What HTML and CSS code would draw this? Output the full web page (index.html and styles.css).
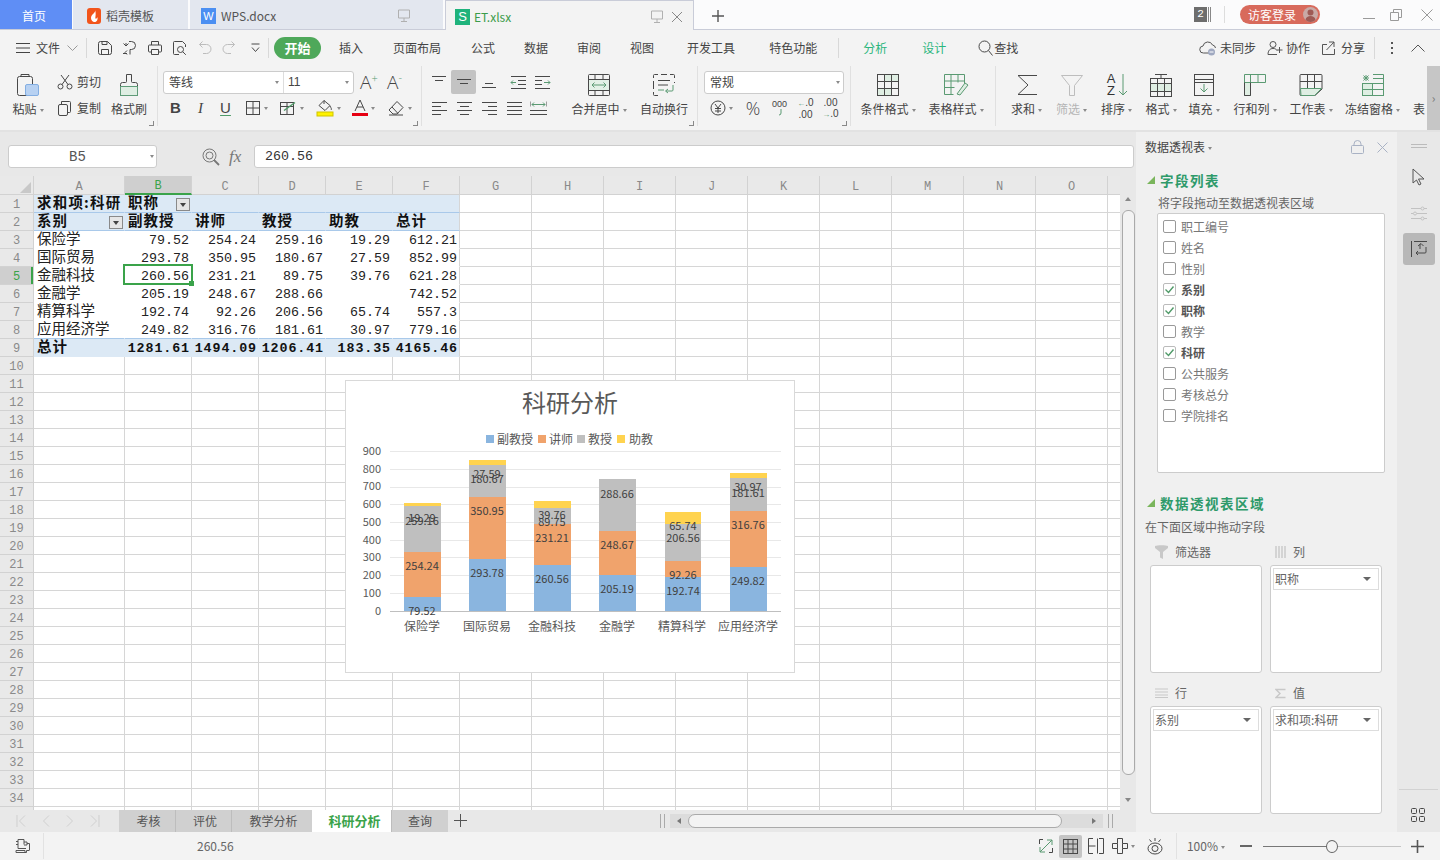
FILE: index.html
```html
<!DOCTYPE html>
<html lang="zh">
<head>
<meta charset="utf-8">
<title>ET.xlsx</title>
<link rel="stylesheet" href="styles.css">
</head>
<body>
<div class="app">
  <header class="titlebar">
    <div class="tab home">首页</div>
    <div class="tab dao">
      <svg class="ti" width="14" height="16" viewBox="0 0 14 16"><rect width="14" height="16" rx="3" fill="#f2541b"/><path d="M8 2c1 3-4 4-4 8 0 2 1.500 4 3.500 4C9.500 14 11 12 10.500 9c-.5 1.500-1.500 2-2 1.500C8 9 9.500 6 8 2z" fill="#fff"/></svg>
      <span>稻壳模板</span>
    </div>
    <div class="tab doc">
      <span class="fileic w">W</span><span>WPS.docx</span>
      <svg class="mon" width="12" height="14" viewBox="0 0 12 14"><path d="M.5 1h11v8H.5zM6 9v3M3 12.500h6"/></svg>
    </div>
    <div class="tab et">
      <span class="fileic s">S</span><span class="etname">ET.xlsx</span>
      <svg class="mon" width="12" height="14" viewBox="0 0 12 14"><path d="M.5 1h11v8H.5zM6 9v3M3 12.500h6"/></svg>
      <svg class="closex" width="12" height="12" viewBox="0 0 12 12"><path d="M1 1l10 10M11 1L1 11"/></svg>
    </div>
    <svg class="plus" width="12" height="12" viewBox="0 0 12 12"><path d="M6 0v12M0 6h12"/></svg>
    <div class="tright">
      <span class="badge">2</span><span class="badgebars"></span><span class="tsep"></span>
      <span class="login">访客登录<svg width="15" height="15" viewBox="0 0 15 15"><circle cx="7.500" cy="7.500" r="7.500" fill="#c9a9a6" stroke="none"/><circle cx="7.500" cy="5.500" r="3" fill="#9e5a55" stroke="none"/><path d="M2.500 13c.5-3 2.500-4 5-4s4.500 1 5 4a7.500 7.500 0 0 1-10 0z" fill="#9e5a55" stroke="none"/></svg></span>
      <svg class="win mn" width="12" height="12" viewBox="0 0 12 12"><path d="M0 9.500h12"/></svg>
      <svg class="win rs" width="12" height="12" viewBox="0 0 12 12"><path d="M.5 3.500h8v8h-8zM3.500 3.500v-3h8v8h-3"/></svg>
      <svg class="win cl" width="12" height="12" viewBox="0 0 12 12"><path d="M.5.500l11 11M11.500.500l-11 11"/></svg>
    </div>
  </header>

  <nav class="menu">
    <svg class="mburger" width="14" height="12" viewBox="0 0 14 12"><path d="M0 1.500h14M0 6h14M0 10.500h14"/></svg>
    <span class="mfile">文件</span>
    <svg class="mchev" width="11" height="6" viewBox="0 0 11 6"><path d="M.5.500l5 5 5-5"/></svg>
    <span class="vsep"></span>
    <div class="qa">
      <svg width="16" height="16" viewBox="0 0 16 16"><path d="M1.500 3.500a2 2 0 0 1 2-2h7l4 4v7a2 2 0 0 1-2 2h-9a2 2 0 0 1-2-2zM4.500 14.500v-5h7v5M5 1.500v3h5v-3"/></svg>
      <svg width="16" height="16" viewBox="0 0 16 16"><path d="M7 1.500h2.500a4 4 0 0 1 0 8H8v5M1.500 3.500L4 6l2.500-2.500M4 6V3M1 13.500h4M5 10.500l-2 2 2 2"/></svg>
      <svg width="16" height="16" viewBox="0 0 16 16"><path d="M4.500 5V1.500h7V5M4.500 12h-2a1 1 0 0 1-1-1V6a1 1 0 0 1 1-1h11a1 1 0 0 1 1 1v5a1 1 0 0 1-1 1h-2M4.500 9.500h7v5h-7z"/></svg>
      <svg width="16" height="16" viewBox="0 0 16 16"><path d="M7 14.500H2.500a1 1 0 0 1-1-1v-11a1 1 0 0 1 1-1h8l3 3V7M8.500 6.500a3 3 0 1 1 0 6 3 3 0 0 1 0-6zM10.800 11.800l3 3"/></svg>
      <svg class="dis" width="16" height="16" viewBox="0 0 16 16"><path d="M5.500 1.500l-3 3 3 3M2.500 4.500h7a4 4 0 0 1 0 9H6"/></svg>
      <svg class="dis" width="16" height="16" viewBox="0 0 16 16"><path d="M10.500 1.500l3 3-3 3M13.500 4.500h-7a4 4 0 0 0 0 9H10"/></svg>
      <svg width="9" height="10" viewBox="0 0 9 10"><path d="M.5 1h8M1 4.500l3.500 4 3.500-4"/></svg>
    </div>
    <span class="vsep s2"></span>
    <span class="pill">开始</span>
    <span class="mi m1">插入</span><span class="mi m2">页面布局</span><span class="mi m3">公式</span><span class="mi m4">数据</span><span class="mi m4">审阅</span><span class="mi m4">视图</span><span class="mi m5">开发工具</span><span class="mi m6">特色功能</span>
    <span class="vsep s3"></span>
    <span class="mi grn m7">分析</span><span class="mi grn m8">设计</span>
    <span class="find"><svg width="15" height="16" viewBox="0 0 15 16"><circle cx="6.500" cy="6.500" r="5.500"/><path d="M10.500 10.500l4 5"/></svg>查找</span>
    <div class="mright">
      <span class="act"><svg width="18" height="16" viewBox="0 0 18 16"><path d="M10 13H4.500a3.500 3.500 0 0 1-.5-7A5 5 0 0 1 13.500 5a3.500 3.500 0 0 1 3 3"/><circle cx="12.500" cy="12" r="3.500" fill="#9fa8c0" stroke="none"/><path d="M10.500 12h4" stroke="#fff"/></svg>未同步</span>
      <span class="act"><svg width="16" height="16" viewBox="0 0 16 16"><circle cx="6" cy="4.500" r="3"/><path d="M1 14.500c0-4 2-6 5-6 2 0 3 .5 4 2M1 14.500h9M12.500 7v6M9.500 10h6"/></svg>协作</span>
      <span class="act"><svg width="17" height="16" viewBox="0 0 17 16"><path d="M6 4.500H1.500v10h12V9M8 2l5 0 0 5M13 2L5.500 10"/></svg>分享</span>
      <span class="vsep s4"></span>
      <span class="dots"><i></i><i></i><i></i></span>
      <svg class="caret" width="14" height="8" viewBox="0 0 14 8"><path d="M.5 7.500L7 1l6.500 6.500"/></svg>
    </div>
  </nav>

  <section class="ribbon">
    <div class="grp g1">
      <div class="big w40">
        <svg width="24" height="24" viewBox="0 0 24 24"><rect x="1.500" y="3.500" width="15" height="19" rx="2"/><path d="M5 3.500V1.500h8v2"/><rect x="9.500" y="11.500" width="13" height="11" rx="1.500" fill="#b7d1f2" stroke="#83aee2"/></svg>
        <span class="lb">粘贴<i class="ar"></i></span>
      </div>
      <div class="smcol">
        <span class="sm"><svg width="16" height="16" viewBox="0 0 16 16"><circle cx="3.500" cy="12.500" r="2.500"/><circle cx="12.500" cy="12.500" r="2.500"/><path d="M5 10.500L12 1M11 10.500L4 1"/></svg>剪切</span>
        <span class="sm"><svg width="16" height="16" viewBox="0 0 16 16"><rect x="1.500" y="4.500" width="9" height="11" rx="1.500"/><path d="M4.500 4.500v-3h8a1 1 0 0 1 1 1v9a1 1 0 0 1-1 1h-2"/></svg>复制</span>
      </div>
      <div class="big w42">
        <svg width="24" height="24" viewBox="0 0 24 24"><path d="M9.500 1.500h5v7a1 1 0 0 0 1 1h3a2 2 0 0 1 2 2v2h-17v-2a2 2 0 0 1 2-2h3a1 1 0 0 0 1-1z"/><rect x="3.500" y="13.500" width="17" height="9" fill="#dfeee3" stroke="#5f9b78"/></svg>
        <span class="lb">格式刷</span>
      </div>
      <i class="cm"></i>
    </div>

    <div class="grp g2">
      <div class="stack">
        <div class="r1">
          <div class="combo font"><span class="cf1">等线<i class="ar"></i></span><span class="cf2">11<i class="ar"></i></span></div>
          <span class="aa big1">A<sup>+</sup></span><span class="aa big2">A<sup>-</sup></span>
        </div>
        <div class="r2">
          <span class="fb bd">B</span><span class="fb it">I</span><span class="fb un">U</span>
          <span class="fa f1"><svg width="16" height="16" viewBox="0 0 16 16"><rect x="1.500" y="1.500" width="13" height="13"/><path d="M8 1.500v13M1.500 8h13"/></svg><i class="ar"></i></span>
          <span class="fa f2"><svg width="18" height="16" viewBox="0 0 18 16"><rect x="1.500" y="2.500" width="13" height="12"/><path d="M1.500 6.500h13M8 2.500v12"/><path d="M5 10.500l11-8" stroke="#4f9a68" stroke-width="1.400"/></svg><i class="ar"></i></span>
          <span class="fa f3"><svg width="18" height="18" viewBox="0 0 18 18"><path d="M8 1.500l6 5-5 5-6-5zM8 1.500V5M14 7c1 2 2 3 1 4"/><rect x="1" y="13" width="16" height="4" fill="#fff200" stroke="#cfc400"/></svg><i class="ar"></i></span>
          <span class="fa f4"><svg width="16" height="18" viewBox="0 0 16 18"><path d="M3 12L8 1l5 11M5 8h6"/><rect y="14" width="16" height="3" fill="#e60012" stroke="none"/></svg><i class="ar"></i></span>
          <span class="fa f5"><svg width="18" height="16" viewBox="0 0 18 16"><path d="M10 1.500l6 6-6 6.500H6L2 10zM5 7l6 6.500"/><path d="M2 15h14" /></svg><i class="ar"></i></span>
        </div>
      </div>
      <i class="cm"></i>
    </div>

    <div class="grp g3">
      <div class="stack alignset">
        <div class="r1 al">
          <span class="ab"><svg width="16" height="16" viewBox="0 0 16 16"><path d="M1 2.500h14M4 6.500h8"/></svg></span>
          <span class="ab on"><svg width="16" height="16" viewBox="0 0 16 16"><path d="M1 5.500h14M4 9.500h8"/></svg></span>
          <span class="ab"><svg width="16" height="16" viewBox="0 0 16 16"><path d="M4 9.500h8M1 13.500h14"/></svg></span>
          <span class="ab ind"><svg width="16" height="16" viewBox="0 0 16 16"><path d="M1 2.500h15M8 6.500h8M8 10.500h8M1 14.500h15"/><path d="M6 8.500H1M3 6.500l-2 2 2 2" stroke="#5a9a72"/></svg></span>
          <span class="ab"><svg width="16" height="16" viewBox="0 0 16 16"><path d="M0 2.500h15M0 6.500h7M0 10.500h7M0 14.500h15"/><path d="M9 8.500h6M13 6.500l2 2-2 2" stroke="#5a9a72"/></svg></span>
        </div>
        <div class="r2 al">
          <span class="ab"><svg width="16" height="16" viewBox="0 0 16 16"><path d="M1 2.500h15M1 6.500h9M1 10.500h15M1 14.500h9"/></svg></span>
          <span class="ab"><svg width="16" height="16" viewBox="0 0 16 16"><path d="M1 2.500h15M4 6.500h9M1 10.500h15M4 14.500h9"/></svg></span>
          <span class="ab"><svg width="16" height="16" viewBox="0 0 16 16"><path d="M1 2.500h15M7 6.500h9M1 10.500h15M7 14.500h9"/></svg></span>
          <span class="ab"><svg width="16" height="16" viewBox="0 0 16 16"><path d="M1 2.500h15M1 6.500h15M1 10.500h15M1 14.500h15"/></svg></span>
          <span class="ab"><svg width="17" height="16" viewBox="0 0 17 16"><path d="M0 1.500v5M17 1.500v5M0 10.500h17M0 14.500h17"/><path d="M2 4.500h13M4 2.500l-2 2 2 2M13 2.500l2 2-2 2" stroke="#5a9a72"/></svg></span>
        </div>
      </div>
      <div class="big w60">
        <svg width="24" height="24" viewBox="0 0 24 24"><rect x="1.500" y="1.500" width="21" height="21" rx="1"/><path d="M1.500 6.500h21M1.500 17.500h21M8 1.500v5M16 1.500v5M8 17.500v5M16 17.500v5"/><rect x="2" y="7" width="20" height="10" fill="#e3f0e6" stroke="none"/><path d="M5 12h14M7.500 9.500L5 12l2.500 2.500M16.500 9.500L19 12l-2.500 2.500" stroke="#5a9a72"/></svg>
        <span class="lb">合并居中<i class="ar"></i></span>
      </div>
      <div class="big w60 sp5">
        <svg width="24" height="24" viewBox="0 0 24 24"><path d="M1.500 5V2.500a1 1 0 0 1 1-1H6M18 1.500h3.500a1 1 0 0 1 1 1V5M1.500 19v2.500a1 1 0 0 0 1 1H6M22.500 10v-1M9 1.500h6M1.500 8v8M6 7.500h12M6 12h10"/><path d="M6 17h6M21 12v5a1 1 0 0 1-1 1h-6M16 16l-2.500 2 2.500 2" stroke="#5a9a72"/></svg>
        <span class="lb">自动换行</span>
      </div>
      <i class="cm"></i>
    </div>

    <div class="grp g4">
      <div class="stack">
        <div class="r1"><div class="combo num"><span>常规</span><i class="ar"></i></div></div>
        <div class="r2 nf">
          <span class="yen"><svg width="16" height="16" viewBox="0 0 16 16"><circle cx="8" cy="8" r="7"/><path d="M5 4l3 4 3-4M8 8v5M5 8.500h6M5 11h6"/></svg><i class="ar"></i></span>
          <span class="pct">%</span>
          <span class="thou">000<svg width="6" height="7" viewBox="0 0 6 7"><path d="M4 0v4a2 2 0 0 1-2 2" stroke="#5a9a72"/></svg></span>
          <span class="dec"><b><em>←</em>.0</b><b>.00</b></span>
          <span class="dec"><b>.00</b><b><em>→</em>.0</b></span>
        </div>
      </div>
      <i class="cm"></i>
    </div>

    <div class="grp g5">
      <div class="big w68">
        <svg width="24" height="24" viewBox="0 0 24 24"><rect x="1.500" y="1.500" width="21" height="21"/><rect x="9" y="2" width="13" height="6" fill="#dfeee3" stroke="none"/><rect x="2" y="16" width="13" height="6" fill="#dfeee3" stroke="none"/><path d="M1.500 8.500h21M1.500 15.500h21M8.500 1.500v21M15.500 1.500v21"/></svg>
        <span class="lb">条件格式<i class="ar"></i></span>
      </div>
      <div class="big w68">
        <svg width="26" height="24" viewBox="0 0 26 24"><path d="M1.500 1.500h20v9M1.500 1.500v20h9M1.500 8h20M1.500 14.500h10M8 1.500v20M15 1.500v8" stroke="#5a9a72"/><path d="M14 21l8-11 3 2-8 10z" stroke="#5a9a72" fill="#dfeee3"/></svg>
        <span class="lb">表格样式<i class="ar"></i></span>
      </div>
    </div>

    <div class="grp g6">
      <div class="big b-sum">
        <svg width="24" height="24" viewBox="0 0 24 24"><path d="M22 2.500H3l10 9.500-10 9.500h19"/></svg>
        <span class="lb">求和<i class="ar"></i></span>
      </div>
      <div class="big b-sum off">
        <svg width="24" height="24" viewBox="0 0 24 24"><path d="M1.500 2.500h21l-8 10v10h-5v-10z" stroke="#bdbdbd"/></svg>
        <span class="lb">筛选<i class="ar"></i></span>
      </div>
      <div class="big b-sum">
        <span class="az"><span class="azt"><b>A</b><b>Z</b></span><svg width="10" height="24" viewBox="0 0 10 24"><path d="M5 1v21M1 18l4 4 4-4" stroke="#5a9a72"/></svg></span>
        <span class="lb">排序<i class="ar"></i></span>
      </div>
      <div class="big b-fmt">
        <svg width="24" height="24" viewBox="0 0 24 24"><path d="M6 1.500h12M12 1.500v4"/><rect x="1.500" y="5.500" width="21" height="18"/><rect x="2" y="10" width="20" height="9" fill="#dfeee3" stroke="none"/><path d="M1.500 10.500h21M1.500 18.500h21M8.500 5.500v18M15.500 5.500v18"/></svg>
        <span class="lb">格式<i class="ar"></i></span>
      </div>
      <div class="big b-fmt">
        <svg width="24" height="24" viewBox="0 0 24 24"><rect x="2.500" y="1.500" width="19" height="21"/><path d="M2.500 6.500h19M2.500 9.500h19"/><path d="M12 11v8M8.500 15.500L12 19l3.500-3.500" stroke="#5a9a72"/></svg>
        <span class="lb">填充<i class="ar"></i></span>
      </div>
      <div class="big b-row">
        <svg width="24" height="24" viewBox="0 0 24 24"><path d="M1.500 1.500h21v8h-15v13h-6zM7.500 1.500v8M15 1.500v8M1.500 9.500h6" stroke="#5a9a72"/><rect x="2" y="10" width="5" height="12" fill="#dfeee3" stroke="none"/><path d="M1.500 9.500v13h6v-13"/></svg>
        <span class="lb">行和列<i class="ar"></i></span>
      </div>
      <div class="big b-ws">
        <svg width="24" height="24" viewBox="0 0 24 24"><path d="M2 1.500h20a1 1 0 0 1 1 1V16l-7 6.500H2a1 1 0 0 1-1-1v-19a1 1 0 0 1 1-1zM1 8.500h22M8.500 1.500v15M15.500 1.500v15"/><path d="M1.500 15.500h21l-7 7H2z" fill="#dfeee3" stroke="#5a9a72"/></svg>
        <span class="lb">工作表<i class="ar"></i></span>
      </div>
      <div class="big b-frz">
        <svg width="24" height="24" viewBox="0 0 24 24"><path d="M2 5h6M5 2v6M2.500 2.500l5 5M7.500 2.500l-5 5" stroke="#5a9a72"/><rect x="1.500" y="10.500" width="21" height="12" stroke="#5a9a72"/><rect x="2" y="11" width="9" height="11" fill="#dfeee3" stroke="none"/><path d="M12 1.500h10.500v9M12 5.500h10.500M1.500 16.500h21M11.500 10.500v12" stroke="#5a9a72"/></svg>
        <span class="lb">冻结窗格<i class="ar"></i></span>
      </div>
      <div class="big b-tb"><span class="clip"></span><span class="lb">表</span></div>
    </div>
    <div class="ribscroll">›</div>
  </section>

  <main class="body">
    <div class="work">
      <div class="fbar">
        <div class="namebox"><span>B5</span><i class="ar"></i></div>
        <svg class="fzoom" width="18" height="18" viewBox="0 0 18 18"><circle cx="7.500" cy="7.500" r="6.500"/><circle cx="7.500" cy="7.500" r="3.500"/><path d="M12 12l5 5" stroke-width="1.800"/></svg>
        <span class="fx">fx</span>
        <div class="finput">260.56</div>
      </div>

      <div class="sheetwrap">
        <div class="gridarea">
          <table class="grid">
            <colgroup><col class="c0"><col class="ca"><col class="cb"><col class="cb"><col class="cb"><col class="cb"><col class="cb"><col class="cg"><col class="cg"><col class="cg"><col class="cg"><col class="cg"><col class="cg"><col class="cg"><col class="cg"><col class="cg"><col class="cz"></colgroup>
            <tr class="head"><th class="corner"><svg width="11" height="11" viewBox="0 0 11 11"><path d="M11 0v11H0z" fill="#c8c8c8" stroke="none"/></svg></th><th>A</th><th class="sel">B</th><th>C</th><th>D</th><th>E</th><th>F</th><th>G</th><th>H</th><th>I</th><th>J</th><th>K</th><th>L</th><th>M</th><th>N</th><th>O</th><th class="z"></th></tr>
            <tr class="pv p1"><th>1</th><td class="cj bo a1">求和项:科研</td><td class="cj bo hasdd">职称<span class="dd"></span></td><td></td><td></td><td></td><td class="fe"></td><td class="o"></td><td class="o"></td><td class="o"></td><td class="o"></td><td class="o"></td><td class="o"></td><td class="o"></td><td class="o"></td><td class="o"></td><td class="o z"></td></tr>
            <tr class="pv p2"><th>2</th><td class="cj bo hasdd">系别<span class="dd"></span></td><td class="cj bo">副教授</td><td class="cj bo">讲师</td><td class="cj bo">教授</td><td class="cj bo">助教</td><td class="cj bo fe">总计</td><td class="o"></td><td class="o"></td><td class="o"></td><td class="o"></td><td class="o"></td><td class="o"></td><td class="o"></td><td class="o"></td><td class="o"></td><td class="o z"></td></tr>
            <tr class="pb"><th>3</th><td class="cj">保险学</td><td class="n">79.52</td><td class="n">254.24</td><td class="n">259.16</td><td class="n">19.29</td><td class="n fe">612.21</td><td class="o"></td><td class="o"></td><td class="o"></td><td class="o"></td><td class="o"></td><td class="o"></td><td class="o"></td><td class="o"></td><td class="o"></td><td class="o z"></td></tr>
            <tr class="pb"><th>4</th><td class="cj">国际贸易</td><td class="n">293.78</td><td class="n">350.95</td><td class="n">180.67</td><td class="n">27.59</td><td class="n fe">852.99</td><td class="o"></td><td class="o"></td><td class="o"></td><td class="o"></td><td class="o"></td><td class="o"></td><td class="o"></td><td class="o"></td><td class="o"></td><td class="o z"></td></tr>
            <tr class="pb"><th class="sel">5</th><td class="cj">金融科技</td><td class="n">260.56</td><td class="n">231.21</td><td class="n">89.75</td><td class="n">39.76</td><td class="n fe">621.28</td><td class="o"></td><td class="o"></td><td class="o"></td><td class="o"></td><td class="o"></td><td class="o"></td><td class="o"></td><td class="o"></td><td class="o"></td><td class="o z"></td></tr>
            <tr class="pb"><th>6</th><td class="cj">金融学</td><td class="n">205.19</td><td class="n">248.67</td><td class="n">288.66</td><td class="n"></td><td class="n fe">742.52</td><td class="o"></td><td class="o"></td><td class="o"></td><td class="o"></td><td class="o"></td><td class="o"></td><td class="o"></td><td class="o"></td><td class="o"></td><td class="o z"></td></tr>
            <tr class="pb"><th>7</th><td class="cj">精算科学</td><td class="n">192.74</td><td class="n">92.26</td><td class="n">206.56</td><td class="n">65.74</td><td class="n fe">557.3</td><td class="o"></td><td class="o"></td><td class="o"></td><td class="o"></td><td class="o"></td><td class="o"></td><td class="o"></td><td class="o"></td><td class="o"></td><td class="o z"></td></tr>
            <tr class="pb p8"><th>8</th><td class="cj">应用经济学</td><td class="n">249.82</td><td class="n">316.76</td><td class="n">181.61</td><td class="n">30.97</td><td class="n fe">779.16</td><td class="o"></td><td class="o"></td><td class="o"></td><td class="o"></td><td class="o"></td><td class="o"></td><td class="o"></td><td class="o"></td><td class="o"></td><td class="o z"></td></tr>
            <tr class="pv p9"><th>9</th><td class="cj bo">总计</td><td class="n bt">1281.61</td><td class="n bt">1494.09</td><td class="n bt">1206.41</td><td class="n bt">183.35</td><td class="n bt fe">4165.46</td><td class="o"></td><td class="o"></td><td class="o"></td><td class="o"></td><td class="o"></td><td class="o"></td><td class="o"></td><td class="o"></td><td class="o"></td><td class="o z"></td></tr>
            <tr><th>10</th><td></td><td></td><td></td><td></td><td></td><td></td><td></td><td></td><td></td><td></td><td></td><td></td><td></td><td></td><td></td><td class="z"></td></tr>
            <tr><th>11</th><td></td><td></td><td></td><td></td><td></td><td></td><td></td><td></td><td></td><td></td><td></td><td></td><td></td><td></td><td></td><td class="z"></td></tr>
            <tr><th>12</th><td></td><td></td><td></td><td></td><td></td><td></td><td></td><td></td><td></td><td></td><td></td><td></td><td></td><td></td><td></td><td class="z"></td></tr>
            <tr><th>13</th><td></td><td></td><td></td><td></td><td></td><td></td><td></td><td></td><td></td><td></td><td></td><td></td><td></td><td></td><td></td><td class="z"></td></tr>
            <tr><th>14</th><td></td><td></td><td></td><td></td><td></td><td></td><td></td><td></td><td></td><td></td><td></td><td></td><td></td><td></td><td></td><td class="z"></td></tr>
            <tr><th>15</th><td></td><td></td><td></td><td></td><td></td><td></td><td></td><td></td><td></td><td></td><td></td><td></td><td></td><td></td><td></td><td class="z"></td></tr>
            <tr><th>16</th><td></td><td></td><td></td><td></td><td></td><td></td><td></td><td></td><td></td><td></td><td></td><td></td><td></td><td></td><td></td><td class="z"></td></tr>
            <tr><th>17</th><td></td><td></td><td></td><td></td><td></td><td></td><td></td><td></td><td></td><td></td><td></td><td></td><td></td><td></td><td></td><td class="z"></td></tr>
            <tr><th>18</th><td></td><td></td><td></td><td></td><td></td><td></td><td></td><td></td><td></td><td></td><td></td><td></td><td></td><td></td><td></td><td class="z"></td></tr>
            <tr><th>19</th><td></td><td></td><td></td><td></td><td></td><td></td><td></td><td></td><td></td><td></td><td></td><td></td><td></td><td></td><td></td><td class="z"></td></tr>
            <tr><th>20</th><td></td><td></td><td></td><td></td><td></td><td></td><td></td><td></td><td></td><td></td><td></td><td></td><td></td><td></td><td></td><td class="z"></td></tr>
            <tr><th>21</th><td></td><td></td><td></td><td></td><td></td><td></td><td></td><td></td><td></td><td></td><td></td><td></td><td></td><td></td><td></td><td class="z"></td></tr>
            <tr><th>22</th><td></td><td></td><td></td><td></td><td></td><td></td><td></td><td></td><td></td><td></td><td></td><td></td><td></td><td></td><td></td><td class="z"></td></tr>
            <tr><th>23</th><td></td><td></td><td></td><td></td><td></td><td></td><td></td><td></td><td></td><td></td><td></td><td></td><td></td><td></td><td></td><td class="z"></td></tr>
            <tr><th>24</th><td></td><td></td><td></td><td></td><td></td><td></td><td></td><td></td><td></td><td></td><td></td><td></td><td></td><td></td><td></td><td class="z"></td></tr>
            <tr><th>25</th><td></td><td></td><td></td><td></td><td></td><td></td><td></td><td></td><td></td><td></td><td></td><td></td><td></td><td></td><td></td><td class="z"></td></tr>
            <tr><th>26</th><td></td><td></td><td></td><td></td><td></td><td></td><td></td><td></td><td></td><td></td><td></td><td></td><td></td><td></td><td></td><td class="z"></td></tr>
            <tr><th>27</th><td></td><td></td><td></td><td></td><td></td><td></td><td></td><td></td><td></td><td></td><td></td><td></td><td></td><td></td><td></td><td class="z"></td></tr>
            <tr><th>28</th><td></td><td></td><td></td><td></td><td></td><td></td><td></td><td></td><td></td><td></td><td></td><td></td><td></td><td></td><td></td><td class="z"></td></tr>
            <tr><th>29</th><td></td><td></td><td></td><td></td><td></td><td></td><td></td><td></td><td></td><td></td><td></td><td></td><td></td><td></td><td></td><td class="z"></td></tr>
            <tr><th>30</th><td></td><td></td><td></td><td></td><td></td><td></td><td></td><td></td><td></td><td></td><td></td><td></td><td></td><td></td><td></td><td class="z"></td></tr>
            <tr><th>31</th><td></td><td></td><td></td><td></td><td></td><td></td><td></td><td></td><td></td><td></td><td></td><td></td><td></td><td></td><td></td><td class="z"></td></tr>
            <tr><th>32</th><td></td><td></td><td></td><td></td><td></td><td></td><td></td><td></td><td></td><td></td><td></td><td></td><td></td><td></td><td></td><td class="z"></td></tr>
            <tr><th>33</th><td></td><td></td><td></td><td></td><td></td><td></td><td></td><td></td><td></td><td></td><td></td><td></td><td></td><td></td><td></td><td class="z"></td></tr>
            <tr><th>34</th><td></td><td></td><td></td><td></td><td></td><td></td><td></td><td></td><td></td><td></td><td></td><td></td><td></td><td></td><td></td><td class="z"></td></tr>
            <tr><th></th><td></td><td></td><td></td><td></td><td></td><td></td><td></td><td></td><td></td><td></td><td></td><td></td><td></td><td></td><td></td><td class="z"></td></tr>
          </table>
          <div class="selbox"><i></i></div>

          <figure class="chart">
            <svg width="450" height="293" viewBox="345 380 450 293">
              <text x="570" y="412" class="ctitle">科研分析</text>
              <g class="leg">
                <rect x="486" y="435" width="8" height="8" fill="#8ab5df"/><text x="497" y="444">副教授</text>
                <rect x="538" y="435" width="8" height="8" fill="#f0a36c"/><text x="549" y="444">讲师</text>
                <rect x="577" y="435" width="8" height="8" fill="#bfbfbf"/><text x="588" y="444">教授</text>
                <rect x="617" y="435" width="8" height="8" fill="#ffd34f"/><text x="629" y="444">助教</text>
              </g>
              <path class="gl" d="M390 451.500H781M390 469.500H781M390 487.500H781M390 504.500H781M390 522.500H781M390 540.500H781M390 557.500H781M390 575.500H781M390 593.500H781"/>
              <g class="ya">
                <text x="381" y="455">900</text><text x="381" y="473">800</text><text x="381" y="490">700</text><text x="381" y="508">600</text><text x="381" y="526">500</text><text x="381" y="544">400</text><text x="381" y="561">300</text><text x="381" y="579">200</text><text x="381" y="597">100</text><text x="381" y="615">0</text>
              </g>
              <g>
                <rect x="404" y="597" width="37" height="14" fill="#8ab5df"/><rect x="404" y="552" width="37" height="45" fill="#f0a36c"/><rect x="404" y="506" width="37" height="46" fill="#bfbfbf"/><rect x="404" y="503" width="37" height="3" fill="#ffd34f"/>
                <rect x="469" y="559" width="37" height="52" fill="#8ab5df"/><rect x="469" y="497" width="37" height="62" fill="#f0a36c"/><rect x="469" y="465" width="37" height="32" fill="#bfbfbf"/><rect x="469" y="460" width="37" height="5" fill="#ffd34f"/>
                <rect x="534" y="565" width="37" height="46" fill="#8ab5df"/><rect x="534" y="524" width="37" height="41" fill="#f0a36c"/><rect x="534" y="508" width="37" height="16" fill="#bfbfbf"/><rect x="534" y="501" width="37" height="7" fill="#ffd34f"/>
                <rect x="599" y="575" width="37" height="36" fill="#8ab5df"/><rect x="599" y="531" width="37" height="44" fill="#f0a36c"/><rect x="599" y="479" width="37" height="52" fill="#bfbfbf"/>
                <rect x="665" y="577" width="36" height="34" fill="#8ab5df"/><rect x="665" y="561" width="36" height="16" fill="#f0a36c"/><rect x="665" y="524" width="36" height="37" fill="#bfbfbf"/><rect x="665" y="512" width="36" height="12" fill="#ffd34f"/>
                <rect x="730" y="567" width="37" height="44" fill="#8ab5df"/><rect x="730" y="511" width="37" height="56" fill="#f0a36c"/><rect x="730" y="478" width="37" height="33" fill="#bfbfbf"/><rect x="730" y="473" width="37" height="5" fill="#ffd34f"/>
              </g>
              <path class="ax" d="M390 611.500H781"/>
              <g class="dl">
                <text x="422" y="615">79.52</text><text x="422" y="570">254.24</text><text x="422" y="525">259.16</text><text x="422" y="522">19.29</text>
                <text x="487" y="577">293.78</text><text x="487" y="515">350.95</text><text x="487" y="483">180.67</text><text x="487" y="478">27.59</text>
                <text x="552" y="583">260.56</text><text x="552" y="542">231.21</text><text x="552" y="526">89.75</text><text x="552" y="519">39.76</text>
                <text x="617" y="593">205.19</text><text x="617" y="549">248.67</text><text x="617" y="498">288.66</text>
                <text x="683" y="595">192.74</text><text x="683" y="579">92.26</text><text x="683" y="542">206.56</text><text x="683" y="530">65.74</text>
                <text x="748" y="585">249.82</text><text x="748" y="529">316.76</text><text x="748" y="497">181.61</text><text x="748" y="491">30.97</text>
              </g>
              <g class="xa">
                <text x="422" y="631">保险学</text><text x="487" y="631">国际贸易</text><text x="552" y="631">金融科技</text><text x="617" y="631">金融学</text><text x="682" y="631">精算科学</text><text x="748" y="631">应用经济学</text>
              </g>
            </svg>
          </figure>
        </div>
        <div class="vscroll"><i class="up"></i><span class="vthumb"></span><i class="down"></i></div>
      </div>

      <div class="tabsbar">
        <div class="nav">
          <svg width="12" height="12" viewBox="0 0 12 12"><path d="M2 0v12M10 .5L4.500 6l5.500 5.500"/></svg>
          <svg width="10" height="12" viewBox="0 0 10 12"><path d="M8 .5L2.500 6 8 11.500"/></svg>
          <svg width="10" height="12" viewBox="0 0 10 12"><path d="M2 .5L7.500 6 2 11.500"/></svg>
          <svg width="12" height="12" viewBox="0 0 12 12"><path d="M10 0v12M2 .5L7.500 6 2 11.500"/></svg>
        </div>
        <span class="stab s1">考核</span><span class="stab s2">评优</span><span class="stab s3">教学分析</span><span class="stab act1">科研分析</span><span class="stab s5">查询</span>
        <svg class="addsheet" width="13" height="13" viewBox="0 0 13 13"><path d="M6.500 0v13M0 6.500h13"/></svg>
        <span class="hs1"></span>
        <div class="hscroll"><i class="hl"></i><span class="hthumb"></span><i class="hr"></i></div>
        <span class="hs2"></span>
      </div>
    </div>

    <aside class="pane">
      <div class="ptitle">
        <span>数据透视表<i class="ar"></i></span>
        <svg class="plock" width="13" height="14" viewBox="0 0 13 14"><rect x=".5" y="5.500" width="12" height="8" rx="1"/><path d="M3 5.500V4a3.500 3.500 0 0 1 7 0v1.500"/></svg>
        <svg class="pclose" width="11" height="11" viewBox="0 0 11 11"><path d="M.5.500l10 10M10.500.500l-10 10"/></svg>
      </div>
      <h2 class="sect s-a"><i class="tri"></i>字段列表</h2>
      <p class="hint ha">将字段拖动至数据透视表区域</p>
      <ul class="fields">
        <li><i class="ck"></i>职工编号</li>
        <li><i class="ck"></i>姓名</li>
        <li><i class="ck"></i>性别</li>
        <li class="on"><i class="ck"><svg width="11" height="11" viewBox="0 0 11 11"><path d="M1.500 5.500l3 3 5-6"/></svg></i>系别</li>
        <li class="on"><i class="ck"><svg width="11" height="11" viewBox="0 0 11 11"><path d="M1.500 5.500l3 3 5-6"/></svg></i>职称</li>
        <li><i class="ck"></i>教学</li>
        <li class="on"><i class="ck"><svg width="11" height="11" viewBox="0 0 11 11"><path d="M1.500 5.500l3 3 5-6"/></svg></i>科研</li>
        <li><i class="ck"></i>公共服务</li>
        <li><i class="ck"></i>考核总分</li>
        <li><i class="ck"></i>学院排名</li>
      </ul>
      <h2 class="sect s-b"><i class="tri"></i>数据透视表区域</h2>
      <p class="hint hb">在下面区域中拖动字段</p>
      <div class="zones">
        <div class="zone">
          <div class="zh"><svg width="13" height="14" viewBox="0 0 13 14"><path d="M0 1c2-1 11-1 13 0v2L8 7v7l-3-1.500V7L0 3z" fill="#c8c8c8" stroke="none"/></svg>筛选器</div>
          <div class="zb"></div>
        </div>
        <div class="zone">
          <div class="zh"><svg width="11" height="12" viewBox="0 0 11 12"><path d="M1 0v12M4 0v12M7 0v12M10 0v12" stroke="#c8c8c8" stroke-width="1.400"/></svg>列</div>
          <div class="zb"><div class="chip">职称<i></i></div></div>
        </div>
        <div class="zone">
          <div class="zh"><svg width="13" height="10" viewBox="0 0 13 10"><path d="M0 1h13M0 4h13M0 7h13M0 9.500h13" stroke="#c8c8c8" stroke-width="1.200"/></svg>行</div>
          <div class="zb"><div class="chip">系别<i></i></div></div>
        </div>
        <div class="zone">
          <div class="zh"><svg width="11" height="11" viewBox="0 0 11 11"><path d="M10.500 1.500H1l4 4-4 4h9.500" stroke="#c8c8c8" stroke-width="1.400"/></svg>值</div>
          <div class="zb"><div class="chip">求和项:科研<i></i></div></div>
        </div>
      </div>
    </aside>

    <aside class="strip">
      <span class="grip"></span>
      <svg class="st1" width="13" height="18" viewBox="0 0 13 18"><path d="M1 1v14l3.500-3 2.500 5 2-1-2.500-5H12z"/></svg>
      <svg class="st2" width="16" height="15" viewBox="0 0 16 15"><path d="M0 2.500h10M13 2.500h3M0 7.500h2M6 7.500h10M0 12.500h10M13 12.500h3"/><circle cx="11.500" cy="2.500" r="1.500"/><circle cx="4" cy="7.500" r="1.500"/><circle cx="11.500" cy="12.500" r="1.500"/></svg>
      <span class="stactive"><svg width="16" height="16" viewBox="0 0 16 16"><path d="M.5 0v16M3 .5h13M9 8V3M7 5l3-2.500 2.500 2.500M15 6v5a1 1 0 0 1-1 1H5M7 10l-2 2 2 2"/></svg></span>
      <span class="stfoot"><svg width="14" height="14" viewBox="0 0 14 14"><rect x=".5" y=".5" width="5" height="5" rx="1"/><rect x="8.500" y=".5" width="5" height="5" rx="1"/><rect x=".5" y="8.500" width="5" height="5" rx="1"/><rect x="8.500" y="8.500" width="5" height="5" rx="1"/></svg></span>
    </aside>
  </main>

  <footer class="status">
    <svg class="st-ic" width="16" height="16" viewBox="0 0 16 16"><path d="M3 10.500v-9h6v5M1 3.500h2M1 6.500h2M9 4h3v3h-3M12 5.500h2.500V12M3 10.500h8M1 14.500h10.500v-2h3M1 14.500v-2h9v2"/></svg>
    <span class="st-sep"></span>
    <span class="st-val">260.56</span>
    <div class="st-right">
      <svg class="v1" width="14" height="14" viewBox="0 0 14 14"><path d="M.5 5V.5H4M13.500 9v4.500H10"/><path d="M8 1h5v5M13 1L1 13M1 8v5h5" stroke="#5a9a72"/></svg>
      <span class="vact"><svg width="15" height="15" viewBox="0 0 15 15"><rect x=".5" y=".5" width="14" height="14"/><path d="M.5 5h14M.5 10h14M5 .5v14M10 .5v14"/></svg></span>
      <svg class="v3" width="16" height="16" viewBox="0 0 16 16"><path d="M5 .5H.5v15H5M11 .5h4.500v15H11M.5 8h7M9.500 .5v15"/></svg>
      <span class="v4"><svg width="16" height="16" viewBox="0 0 16 16"><path d="M5.500.5h5v5h5v5h-5v5h-5v-5h-5v-5h5zM5.500 5.500v5M10.500 5.500v5"/></svg><i class="ar"></i></span>
      <svg class="v5" width="16" height="18" viewBox="0 0 16 18"><ellipse cx="8" cy="11.500" rx="7" ry="5.500"/><circle cx="8" cy="11.500" r="3"/><path d="M8 1v3M2.500 2.500L4.500 5M13.500 2.500L11.500 5"/></svg>
      <span class="st-sep s2b"></span>
      <span class="zoomv">100%<i class="ar"></i></span>
      <span class="zminus"></span>
      <div class="slider"><i></i></div>
      <svg class="zplus" width="13" height="13" viewBox="0 0 13 13"><path d="M6.500 0v13M0 6.500h13"/></svg>
    </div>
  </footer>
</div>
</body>
</html>
```
FILE: styles.css
```css
* { box-sizing: border-box; }
html, body { margin: 0; padding: 0; }
body {
  width: 1440px; height: 860px; overflow: hidden;
  font: 12px/16px "Noto Sans CJK SC", "Noto Sans", sans-serif;
  color: #444; background: #f3f3f3;
}
svg { display: block; fill: none; stroke: #484848; flex: none; }
.app { display: flex; flex-direction: column; height: 860px; }
.ar {
  display: inline-block; width: 0; height: 0; margin-left: 3px; vertical-align: 2px;
  border-left: 2.5px solid transparent; border-right: 2.5px solid transparent; border-top: 3px solid #8a8a8a;
}

/* title bar */
.titlebar { display: flex; align-items: stretch; height: 30px; background: #fbfbfc; border-bottom: 1px solid #c9ccd8; flex: none; }
.tab { display: flex; align-items: center; background: #e3e7ef; color: #555; height: 29px; padding-top: 2px; }
.ti { stroke: none; }
.home { width: 72px; background: #5f8ef5; color: #fff; justify-content: center; margin-right: 1px; padding-right: 4px; }
.dao { width: 115px; padding-left: 14px; margin-right: 2px; gap: 5px; }
.doc { width: 253px; padding-left: 11px; gap: 5px; }
.et { width: 249px; margin-left: 2px; padding-left: 9px; gap: 5px; background: #f3f3f3; border: 1px solid #c9ccd8; border-bottom: 0; height: 30px; }
.fileic { width: 15px; height: 16px; color: #fff; font: 11px/16px "Liberation Sans", sans-serif; text-align: center; }
.fileic.w { background: #4b8ff2; }
.fileic.s { background: #1fb37c; font-size: 13px; }
.etname { color: #3b9c4a; margin-left: -1px; }
.mon { stroke: #b0b0b0; }
.doc .mon { margin-left: 117px; }
.et .mon { margin-left: 135px; }
.closex { margin-left: 3px; stroke: #888; }
.plus { margin: 10px 0 0 18px; stroke: #555; stroke-width: 1.4; }
.tright { margin-left: auto; display: flex; align-items: center; padding-right: 7px; }
.badge { width: 13px; height: 15px; background: #6d6d6d; color: #fff; font: 11px/15px "Liberation Mono", monospace; text-align: center; }
.badgebars { width: 3px; height: 15px; margin-left: 1px; border-left: 1px solid #888; border-right: 1px solid #888; }
.tsep { width: 1px; height: 17px; background: #ddd; margin: 0 13px; }
.login { display: flex; align-items: center; justify-content: space-between; width: 80px; height: 19px; border-radius: 10px; background: #d86a5c; color: #fff; padding: 0 2px 0 8px; margin-left: 2px; }
.win { stroke: #9a9a9a; }
.mn { margin-left: 43px; }
.rs { margin-left: 15px; }
.cl { margin-left: 19px; }

/* menu row */
.menu { display: flex; align-items: center; height: 36px; flex: none; padding-left: 16px; }
.mburger { stroke: #444; }
.mfile { margin-left: 6px; }
.mchev { margin-left: 7px; stroke: #999; }
.vsep { width: 1px; height: 20px; background: #d8d8d8; margin-left: 8px; }
.qa { display: flex; align-items: center; gap: 9px; margin-left: 10px; }
.qa .dis { stroke: #bcbcbc; }
.qa svg:last-child { margin-left: 5px; }
.qa svg:nth-child(6) { margin-left: -1px; }
.vsep.s2 { margin-left: 8px; }
.pill { margin-left: 5px; width: 47px; height: 22px; border-radius: 11px; background: #4ea85a; color: #fff; font-weight: 700; font-size: 13px; line-height: 22px; text-align: center; }
.mi { flex: none; }
.m1 { margin-left: 18px; }
.m2 { margin-left: 30px; }
.m3 { margin-left: 30px; }
.m4 { margin-left: 29px; }
.m5 { margin-left: 33px; }
.m6 { margin-left: 34px; }
.vsep.s3 { margin-left: 21px; }
.grn { color: #2cb67d; }
.m7 { margin-left: 24px; }
.m8 { margin-left: 35px; }
.find { display: flex; align-items: center; margin-left: 32px; gap: 1px; }
.mright { margin-left: auto; display: flex; align-items: center; padding-right: 15px; }
.act { display: flex; align-items: center; gap: 3px; margin-right: 11px; }
.act svg { stroke: #555; }
.vsep.s4 { margin-left: -2px; height: 22px; }
.dots { display: flex; flex-direction: column; gap: 3px; margin-left: 16px; }
.dots i { width: 2px; height: 2px; background: #555; }
.caret { margin-left: 18px; stroke: #555; }

/* ribbon */
.ribbon { display: flex; height: 66px; flex: none; position: relative; border-bottom: 2px solid #e2e2e2; }
.grp { display: flex; position: relative; height: 60px; }
.grp + .grp { border-left: 1px solid #e0e0e0; }
.cm { position: absolute; right: 3px; bottom: 0; width: 5px; height: 5px; border-right: 1px solid #888; border-bottom: 1px solid #888; }
.g1 { width: 157px; padding-left: 8px; }
.g2 { width: 264px; padding-left: 5px; }
.g3 { width: 276px; padding-left: 4px; }
.g4 { width: 153px; padding-left: 6px; }
.g5 { width: 145px; padding-left: 3px; gap: 0; }
.g6 { width: 432px; padding-left: 8px; overflow: hidden; }
.big { display: flex; flex-direction: column; align-items: center; padding-top: 7px; flex: none; }
.big > svg, .clip, .az { height: 24px; }
.lb { margin-top: 4px; white-space: nowrap; color: #444; height: 16px; line-height: 16px; }
.w40 { width: 40px; }
.w42 { width: 42px; margin-left: 5px; }
.w60 { width: 60px; margin-left: 13px; }
.w60.sp5 { margin-left: 5px; }
.w68 { width: 68px; }
.b-sum { width: 45px; }
.b-fmt { width: 44px; margin-left: 0; }
.b-fmt + .b-fmt { margin-left: -1px; }
.b-row { width: 48px; margin-left: 5px; }
.b-ws { width: 54px; margin-left: 5px; }
.b-frz { width: 59px; margin-left: 5px; }
.b-tb { width: 24px; margin-left: 5px; }
.clip { display: block; }
.off svg { stroke: #bdbdbd; }
.off .lb { color: #b5b5b5; }
.az { display: flex; gap: 1px; }
.azt { display: flex; flex-direction: column; width: 12px; font: 13px/12px "Liberation Sans", sans-serif; color: #333; text-align: center; }
.azt b { font-weight: 400; display: block; height: 12px; }
.smcol { display: flex; flex-direction: column; margin-left: 9px; width: 46px; padding-top: 8px; gap: 10px; }
.sm { display: flex; align-items: center; gap: 4px; height: 16px; }
.stack { display: flex; flex-direction: column; padding-top: 4px; flex: none; }
.r1 { display: flex; align-items: center; height: 24px; }
.r2 { display: flex; align-items: center; height: 24px; margin-top: 2px; }
.combo { display: flex; align-items: center; background: #fff; border: 1px solid #ccc; border-radius: 3px; height: 23px; }
.font { width: 191px; }
.cf1 { display: flex; align-items: center; justify-content: space-between; width: 120px; padding: 0 4px 0 5px; border-right: 1px solid #ddd; height: 21px; }
.cf2 { display: flex; align-items: center; justify-content: space-between; flex: 1; padding: 0 4px; font-family: "Liberation Sans", sans-serif; }
.aa { font: 300 19px/20px "Open Sans", sans-serif; color: #444; }
.aa sup { font-size: 11px; line-height: 0; color: #5a9a72; vertical-align: 7px; }
.big1 { margin-left: 6px; width: 27px; }
.fb { width: 25px; text-align: center; font: 15px/18px "Liberation Sans", sans-serif; color: #444; }
.bd { font-weight: 700; }
.it { font-family: "Liberation Serif", serif; font-style: italic; }
.un { text-decoration: underline; text-decoration-color: #4f9a68; text-underline-offset: 2px; }
.fa { display: flex; align-items: center; flex: none; }
.f1 { width: 34px; margin-left: 7px; }
.f2 { width: 37px; }
.f3 { width: 36px; }
.f4 { width: 35px; }
.f5 { width: 30px; }
.al { gap: 0; }
.ab { display: flex; align-items: center; justify-content: center; width: 25px; height: 24px; border-radius: 2px; }
.ab.on { background: #c3c3c3; }
.ab.ind { margin-left: 4px; }
.alignset { width: 130px; }
.num { width: 140px; justify-content: space-between; padding: 0 3px 0 5px; }
.nf { padding-left: 6px; }
.yen { display: flex; align-items: center; width: 30px; }
.pct { width: 26px; font: 300 18px/20px "Open Sans", sans-serif; text-align: center; color: #444; }
.thou { width: 27px; font: 9px/9px "Liberation Sans", sans-serif; text-align: center; display: flex; flex-direction: column; align-items: center; }
.dec { width: 25px; display: flex; flex-direction: column; align-items: center; font: 400 10px/11px "Liberation Sans", sans-serif; }
.dec b { font-weight: 400; }
.dec em { font-style: normal; color: #5a9a72; font-size: 8px; }
.ribscroll { position: absolute; right: 0; top: 0; width: 13px; height: 64px; background: #c6c6c6; color: #777; line-height: 64px; text-align: center; }

/* main */
.body { display: flex; flex: 1; min-height: 0; border-top: 0; }
.work { width: 1136px; display: flex; flex-direction: column; flex: none; background: #e8e8e8; }
.fbar { display: flex; align-items: center; height: 44px; padding: 5px 2px 0 8px; background: #e8e8e8; flex: none; }
.namebox { display: flex; align-items: center; justify-content: space-between; width: 149px; height: 23px; background: #fff; border: 1px solid #ccc; border-radius: 3px; padding: 0 2px 0 60px; font: 14px "Liberation Mono", monospace; color: #555; }
.fzoom { margin-left: 45px; stroke: #777; }
.fx { width: 34px; padding-left: 9px; font: italic 17px "Liberation Serif", serif; color: #777; }
.finput { flex: 1; height: 23px; background: #fff; border: 1px solid #ccc; border-radius: 3px; padding-left: 10px; font: 13.330px/21px "Liberation Mono", monospace; color: #333; }

.sheetwrap { display: flex; height: 634px; flex: none; }
.gridarea { width: 1120px; position: relative; overflow: hidden; background: #fff; flex: none; }
.grid { table-layout: fixed; width: 1120px; border-collapse: separate; border-spacing: 0; font: 13.330px/17px "Liberation Mono", "Noto Sans CJK SC", monospace; color: #222; }
.c0 { width: 34px; } .ca { width: 91px; } .cb { width: 67px; } .cg { width: 72px; } .cz { width: 12px; }
.grid tr { height: 18px; }
.grid th, .grid td { height: 18px; padding: 0; border-right: 1px solid #d6d6d6; border-bottom: 1px solid #d6d6d6; white-space: nowrap; }
.grid th { background: #e9e9e9; color: #8a8a8a; font: 12px/14px "Liberation Mono", monospace; text-align: center; border-color: #d2d2d2; padding-top: 3px; }
.grid .z { border-right: 0; }
.grid th.sel { background: #cfcfcf; color: #3aa34a; }
.head th.sel { border-bottom: 2px solid #3aa34a; }
tr:not(.head) th.sel { box-shadow: inset -2px 0 0 #3aa34a; }
.corner svg { margin: 2px 0 0 20px; }
.grid td.cj { font: 14.500px/13px "Noto Sans CJK SC", sans-serif; padding: 0 0 4px 3px; color: #222; }
.grid td.bo { font-weight: 700; letter-spacing: 1px; color: #111; }
.grid td.a1 { letter-spacing: 1.200px; }
.grid td.n { text-align: right; padding: 2px 2px 0 0; line-height: 15px; }
.grid td.bt { font-weight: 700; letter-spacing: .9px; padding-right: 1px; color: #111; }
.pv td:not(.o) { background: #dce9f5; border-right-color: #dce9f5; border-bottom-color: #a9c9ea; }
.p1 td:not(.o) { border-bottom-color: #a9c9ea; }
.p9 td:not(.o) { border-bottom-color: #dce9f5; }
.pb td:not(.o) { border-color: #fff; }
.p8 td:not(.o) { border-bottom-color: #a9c9ea; }
.grid td.fe { border-right-color: #d6d6d6; }
.hasdd { position: relative; }
.dd { position: absolute; right: 1px; top: 3px; width: 14px; height: 13px; border: 1px solid #8a8a8a; background: #e6e6e6; }
.dd::after { content: ""; position: absolute; left: 3px; top: 4px; border-left: 3.500px solid transparent; border-right: 3.500px solid transparent; border-top: 4px solid #444; }
.selbox { position: absolute; left: 123px; top: 88px; width: 70px; height: 21px; border: 2px solid #3aa34a; }
.selbox i { position: absolute; right: -3px; bottom: -3px; width: 5px; height: 5px; background: #3aa34a; border: 0; }
.chart { position: absolute; left: 345px; top: 204px; width: 450px; height: 293px; margin: 0; background: #fff; outline: 1px solid #d9d9d9; outline-offset: -1px; }
.chart svg { stroke: none; }
.chart text { font-family: "Noto Sans CJK SC", sans-serif; }
.ctitle { font-size: 24px; fill: #595959; text-anchor: middle; }
.leg text { font-size: 12px; fill: #595959; }
.gl { stroke: #e8e8e8; fill: none; }
.ax { stroke: #bfbfbf; fill: none; }
.ya text { font-size: 11px; fill: #595959; text-anchor: end; }
.dl text { font-size: 11px; fill: #404040; text-anchor: middle; }
.xa text { font-size: 12px; fill: #595959; text-anchor: middle; }

.vscroll { width: 16px; display: flex; flex-direction: column; align-items: center; background: #e8e8e8; padding-top: 21px; position: relative; }
.vscroll .up { width: 0; height: 0; border-left: 3px solid transparent; border-right: 3px solid transparent; border-bottom: 4px solid #888; }
.vthumb { width: 13px; height: 565px; margin-top: 9px; border: 1px solid #aaa; border-radius: 6px; background: #f3f3f3; }
.vscroll .down { margin-top: 23px; width: 0; height: 0; border-left: 3px solid transparent; border-right: 3px solid transparent; border-top: 4px solid #888; }

.tabsbar { display: flex; align-items: stretch; height: 22px; background: #e8e8e8; flex: none; }
.nav { display: flex; align-items: center; gap: 14px; width: 119px; padding-left: 15px; }
.nav svg { stroke: #cfcfcf; }
.stab { display: block; text-align: center; line-height: 22px; background: #d0d0d0; border-right: 1px solid #bdbdbd; color: #555; padding-left: 3px; }
.stab.s1 { width: 57px; } .stab.s2 { width: 56px; } .stab.s3 { width: 80px; border-right: 0; }
.stab.act1 { width: 80px; background: #fff; color: #3aa34a; font-weight: 700; font-size: 13px; padding-left: 6px; border-right: 1px solid #bdbdbd; }
.stab.s5 { width: 56px; border-right: 0; padding-left: 0; }
.addsheet { margin: 4px 0 0 6px; stroke: #555; }
.hs1 { width: 5px; height: 14px; margin: 4px 0 0 193px; border-left: 1px solid #aaa; border-right: 1px solid #aaa; }
.hscroll { position: relative; width: 433px; height: 14px; margin: 4px 0 0 5px; background: #dcdcdc; display: flex; align-items: center; }
.hthumb { position: absolute; left: 18px; width: 374px; height: 14px; border: 1px solid #aaa; border-radius: 7px; background: #f3f3f3; }
.hl { position: absolute; left: 7px; width: 0; height: 0; border-top: 3.500px solid transparent; border-bottom: 3.500px solid transparent; border-right: 4px solid #777; }
.hr { position: absolute; right: 7px; width: 0; height: 0; border-top: 3.500px solid transparent; border-bottom: 3.500px solid transparent; border-left: 4px solid #777; }
.hs2 { width: 5px; height: 14px; margin: 4px 0 0 5px; border-left: 1px solid #aaa; border-right: 1px solid #aaa; }

/* task pane */
.pane { width: 261px; flex: none; background: #f0f0f0; position: relative; }
.ptitle { display: flex; align-items: center; height: 30px; padding: 0 0 0 9px; color: #444; }
.plock { margin-left: auto; stroke: #a9b2c4; }
.pclose { margin: 0 9px 0 13px; stroke: #a9b2c4; }
.sect { display: flex; align-items: center; margin: 0; font-size: 13.500px; line-height: 18px; font-weight: 700; color: #2e9a6a; letter-spacing: 1.500px; padding-left: 11px; }
.s-a { margin-top: 9px; }
.s-b { margin-top: 21px; }
.tri { width: 0; height: 0; margin-right: 5px; border-left: 8px solid transparent; border-bottom: 8px solid #7ab55c; }
.hint { margin: 0; color: #666; }
.ha { margin: 6px 0 0 22px; }
.hb { margin: 7px 0 0 9px; }
.fields { list-style: none; margin: 2px 0 0 21px; padding: 2px 0 0 5px; width: 228px; height: 260px; background: #fff; border: 1px solid #ccc; border-radius: 2px; }
.fields li { display: flex; align-items: center; gap: 5px; height: 21px; color: #777; }
.fields li.on { font-weight: 700; color: #555; }
.ck { width: 13px; height: 13px; border: 1px solid #999; border-radius: 2px; background: #fff; flex: none; }
.ck svg { stroke: #4f9a68; stroke-width: 1.400; }
.on .ck { border-color: #bbb; }
.zones { display: grid; grid-template-columns: 112px 112px; gap: 8px; margin: 5px 0 0 14px; }
.zh { display: flex; align-items: center; height: 25px; gap: 7px; color: #666; padding: 0 0 1px 5px; }
.zb { height: 108px; background: #fff; border: 1px solid #ccc; border-radius: 3px; padding: 2px; }
.chip { display: flex; align-items: center; justify-content: space-between; height: 22px; border: 1px solid #ddd; padding: 0 7px 0 1px; color: #666; }
.chip i { width: 0; height: 0; border-left: 4px solid transparent; border-right: 4px solid transparent; border-top: 4px solid #666; }

.strip { width: 43px; flex: none; background: #e8e8e8; display: flex; flex-direction: column; align-items: center; }
.grip { width: 16px; height: 4px; margin-top: 12px; border-top: 1px solid #bbb; border-bottom: 1px solid #bbb; }
.st1 { margin-top: 20px; stroke: #555; }
.st2 { margin-top: 20px; stroke: #c2c2c2; }
.stactive { display: flex; align-items: center; justify-content: center; width: 32px; height: 32px; margin-top: 12px; background: #b8b8b8; border-radius: 3px; }
.stfoot { margin-top: auto; width: 39px; height: 43px; border-top: 1px solid #d2d2d2; padding: 18px 0 0 12px; }

/* status */
.status { display: flex; align-items: center; height: 28px; flex: none; background: #f3f3f3; padding-left: 15px; }
.st-ic { stroke: #555; }
.st-sep { width: 1px; height: 26px; background: #e2e2e2; margin-left: 12px; }
.st-val { margin-left: 153px; color: #666; font-size: 12px; }
.st-right { margin-left: auto; display: flex; align-items: center; padding-right: 16px; }
.v1 { stroke: #484848; }
.vact { display: flex; align-items: center; justify-content: center; width: 23px; height: 23px; margin-left: 6px; background: #c4c4c4; border-radius: 2px; }
.v3 { margin-left: 6px; }
.v4 { display: flex; align-items: center; margin-left: 8px; }
.v5 { margin-left: 12px; }
.st-sep.s2b { margin-left: 13px; }
.zoomv { margin-left: 10px; color: #666; }
.zminus { width: 12px; height: 2px; background: #666; margin-left: 15px; }
.slider { position: relative; width: 138px; height: 1px; margin-left: 11px; background: linear-gradient(to right, #777 50%, #c4c4c4 50%); }
.slider i { position: absolute; left: 63px; top: -6px; width: 12px; height: 13px; border: 1px solid #666; border-radius: 50%; background: #f3f3f3; }
.zplus { margin-left: 10px; stroke: #555; stroke-width: 1.6; }
```
